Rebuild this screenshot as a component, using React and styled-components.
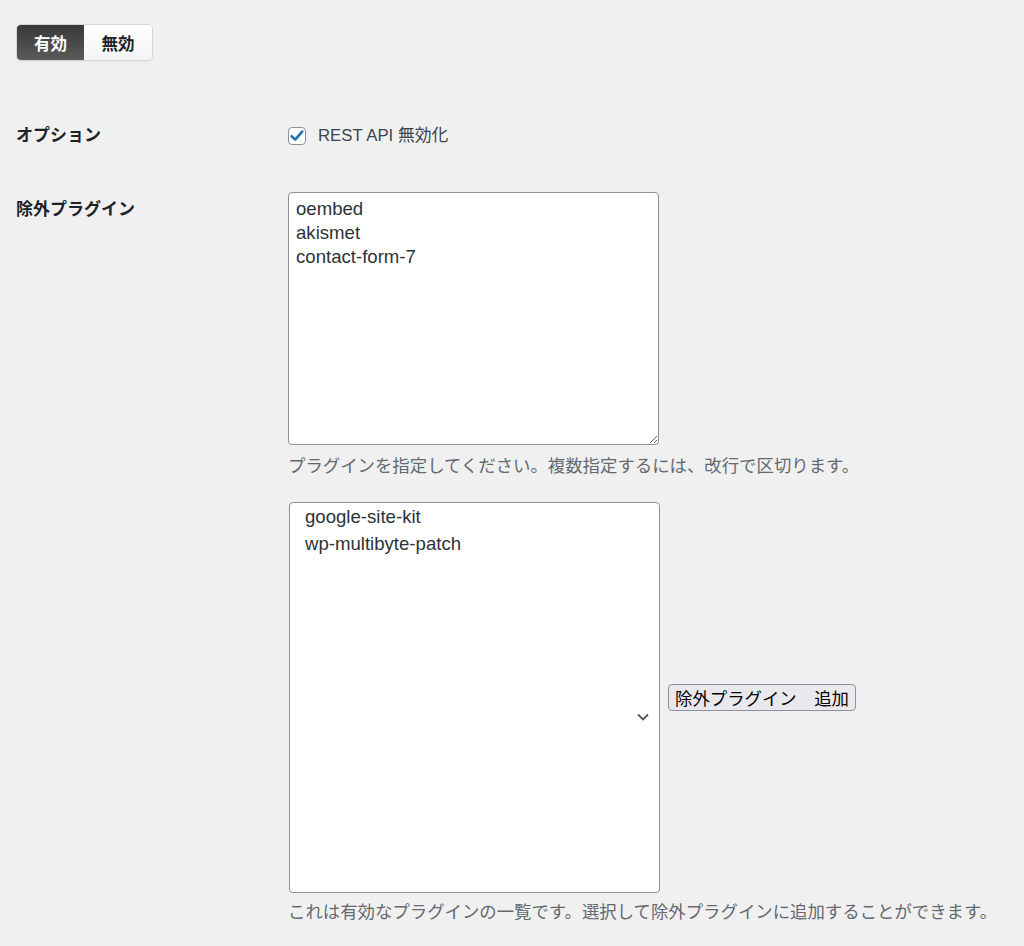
import React, { useState } from "react";
import styled, { createGlobalStyle } from "styled-components";

const GlobalStyle = createGlobalStyle`
  body {
    margin: 0;
    background: #f0f0f1;
    font-family: "Liberation Sans", "Noto Sans CJK JP", sans-serif;
    color: #1d2327;
  }
`;

const Page = styled.div`
  padding: 24px 16px 30px;
`;

const Toggle = styled.div`
  display: inline-flex;
  border: 1px solid #d6d6d6;
  border-radius: 5px;
  overflow: hidden;
  box-shadow: 0 1px 2px rgba(0, 0, 0, 0.06);
`;

const ToggleButton = styled.button`
  width: ${p => p.$w}px;
  height: 35px;
  border: 0;
  padding: 0;
  font-family: inherit;
  font-size: 16.5px;
  font-weight: bold;
  cursor: pointer;
  color: ${p => (p.$active ? "#fff" : "#1d2327")};
  background: ${p =>
    p.$active
      ? "linear-gradient(to bottom, #393939, #5a5a5a)"
      : "linear-gradient(to bottom, #ffffff, #f4f4f4)"};
`;

const FormTable = styled.div`
  margin-top: 63px;
  display: flex;
  flex-direction: column;
  gap: 44px;
`;

const Row = styled.div`
  display: grid;
  grid-template-columns: 272px 1fr;
  align-items: start;
`;

const Label = styled.div`
  font-size: 17px;
  font-weight: bold;
  line-height: 24px;
  color: #1d2327;
  padding-top: ${p => p.$top || 0}px;
`;

const CheckLine = styled.label`
  display: flex;
  align-items: center;
  gap: 12px;
  font-size: 16.8px;
  line-height: 24px;
  color: #3c434a;
  cursor: pointer;
`;

const CheckBox = styled.span`
  width: 16px;
  height: 16px;
  border: 1px solid #8c8f94;
  border-radius: 4px;
  background: #fff;
  display: flex;
  align-items: center;
  justify-content: center;
`;

const TextArea = styled.textarea`
  display: block;
  box-sizing: border-box;
  width: 371px;
  height: 253px;
  margin: 0;
  padding: 4px 7px;
  border: 1px solid #8c8f94;
  border-radius: 4px;
  background: #fff;
  font-family: "Liberation Sans", "Noto Sans CJK JP", sans-serif;
  font-size: 18.6px;
  line-height: 24px;
  color: #2c3338;
  outline: none;
`;

const Description = styled.p`
  margin: ${p => p.$top}px 0 0;
  font-size: 17.4px;
  line-height: 24px;
  color: #646970;
  white-space: nowrap;
`;

const PickerLine = styled.div`
  display: flex;
  align-items: center;
  gap: 8px;
  margin-top: 24px;
  margin-left: 1px;
`;

const ListBox = styled.div`
  position: relative;
  box-sizing: border-box;
  width: 371px;
  height: 391px;
  border: 1px solid #8c8f94;
  border-radius: 4px;
  background: #fff;
`;

const Option = styled.div`
  padding-left: 15px;
  font-size: 18.6px;
  line-height: 27px;
  color: ${p => (p.$selected ? "#fff" : "#2c3338")};
  background: ${p => (p.$selected ? "#2271b1" : "transparent")};
  cursor: default;
`;

const Chevron = styled.svg`
  position: absolute;
  right: 9px;
  top: 55%;
  margin-top: -6px;
`;

const AddButton = styled.button`
  height: 27px;
  padding: 0 6px;
  border: 1px solid #8f8f9d;
  border-radius: 4px;
  background: #e9e9ed;
  font-family: "Liberation Sans", "Noto Sans CJK JP", sans-serif;
  font-size: 17.4px;
  color: #000;
  cursor: pointer;
`;

const available = ["google-site-kit", "wp-multibyte-patch"];

export default function App() {
  const [enabled, setEnabled] = useState(true);
  const [restOff, setRestOff] = useState(true);
  const [selected, setSelected] = useState(null);

  return (
    <Page>
      <GlobalStyle />
      <Toggle>
        <ToggleButton $w={67} $active={enabled} onClick={() => setEnabled(true)}>
          有効
        </ToggleButton>
        <ToggleButton $w={68} $active={!enabled} onClick={() => setEnabled(false)}>
          無効
        </ToggleButton>
      </Toggle>

      <FormTable>
        <Row>
          <Label>オプション</Label>
          <CheckLine onClick={() => setRestOff(!restOff)}>
            <CheckBox>
              {restOff && (
                <svg width="16" height="16" viewBox="0 0 16 16">
                  <path
                    d="M2.6 8.2 L6.2 11.6 L13.2 3.6"
                    fill="none"
                    stroke="#2271b1"
                    strokeWidth="2.6"
                    strokeLinecap="round"
                    strokeLinejoin="round"
                  />
                </svg>
              )}
            </CheckBox>
            REST API 無効化
          </CheckLine>
        </Row>

        <Row>
          <Label $top={6}>除外プラグイン</Label>
          <div>
            <TextArea defaultValue={"oembed\nakismet\ncontact-form-7"} />
            <Description $top={9}>
              プラグインを指定してください。複数指定するには、改行で区切ります。
            </Description>
            <PickerLine>
              <ListBox role="listbox">
                {available.map(name => (
                  <Option
                    key={name}
                    $selected={selected === name}
                    onClick={() => setSelected(name)}
                  >
                    {name}
                  </Option>
                ))}
                <Chevron width="14" height="12" viewBox="0 0 14 12">
                  <polyline
                    points="2,3.5 7,8.5 12,3.5"
                    fill="none"
                    stroke="#50575e"
                    strokeWidth="1.9"
                  />
                </Chevron>
              </ListBox>
              <AddButton>除外プラグイン　追加</AddButton>
            </PickerLine>
            <Description $top={7}>
              これは有効なプラグインの一覧です。選択して除外プラグインに追加することができます。
            </Description>
          </div>
        </Row>
      </FormTable>
    </Page>
  );
}
